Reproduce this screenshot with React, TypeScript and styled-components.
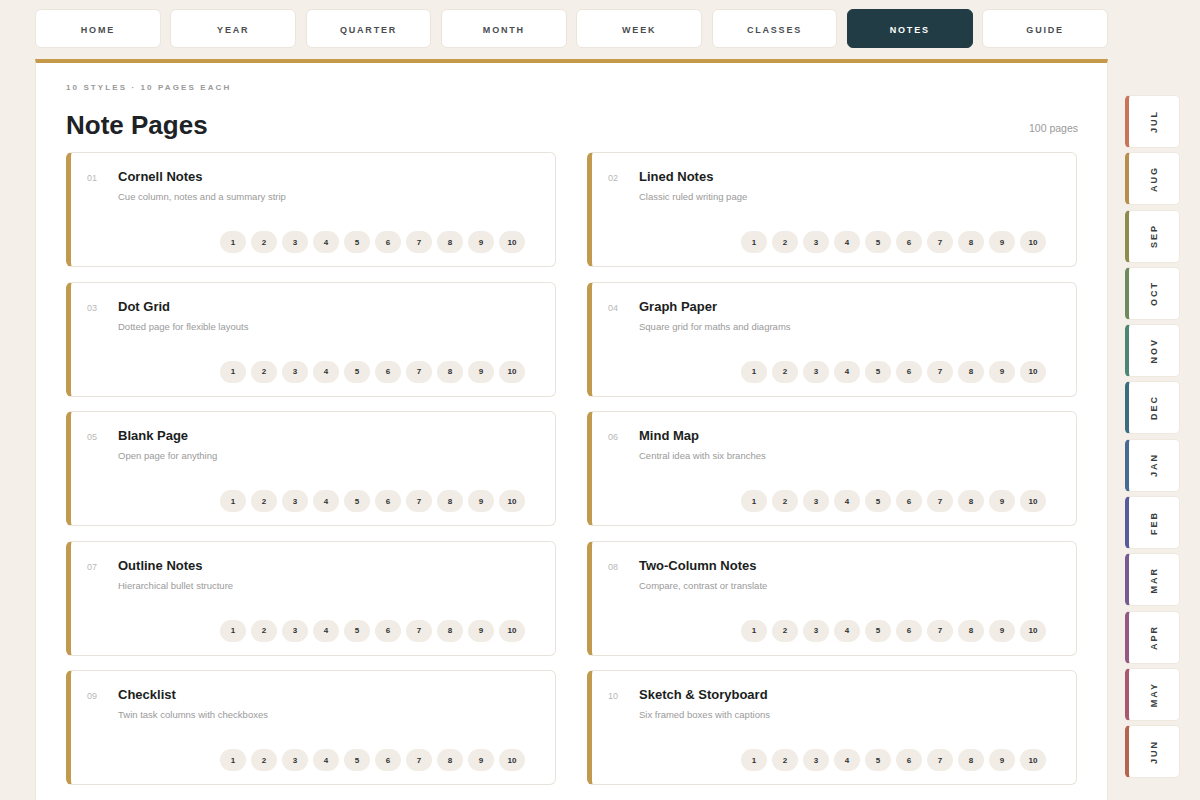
import styled, { createGlobalStyle } from "styled-components";

const GlobalStyle = createGlobalStyle`
  html, body {
    margin: 0;
    padding: 0;
    background: #f4efe9;
    font-family: "Liberation Sans", Arial, sans-serif;
  }
  * { box-sizing: border-box; }
`;

const navItems = ["HOME", "YEAR", "QUARTER", "MONTH", "WEEK", "CLASSES", "NOTES", "GUIDE"];

const noteStyles = [
  { title: "Cornell Notes", desc: "Cue column, notes and a summary strip" },
  { title: "Lined Notes", desc: "Classic ruled writing page" },
  { title: "Dot Grid", desc: "Dotted page for flexible layouts" },
  { title: "Graph Paper", desc: "Square grid for maths and diagrams" },
  { title: "Blank Page", desc: "Open page for anything" },
  { title: "Mind Map", desc: "Central idea with six branches" },
  { title: "Outline Notes", desc: "Hierarchical bullet structure" },
  { title: "Two-Column Notes", desc: "Compare, contrast or translate" },
  { title: "Checklist", desc: "Twin task columns with checkboxes" },
  { title: "Sketch & Storyboard", desc: "Six framed boxes with captions" },
];

const months = [
  { name: "JUL", color: "#c8735a" },
  { name: "AUG", color: "#b98d4b" },
  { name: "SEP", color: "#8e8b4f" },
  { name: "OCT", color: "#6e8a5c" },
  { name: "NOV", color: "#4c8572" },
  { name: "DEC", color: "#3d6c80" },
  { name: "JAN", color: "#476a92" },
  { name: "FEB", color: "#585c9a" },
  { name: "MAR", color: "#785a93" },
  { name: "APR", color: "#935883" },
  { name: "MAY", color: "#a8586c" },
  { name: "JUN", color: "#b5654d" },
];

const pages = Array.from({ length: 10 }, (_, i) => i + 1);

const App = () => {
  return (
    <>
      <GlobalStyle />
      <Layout>
        <MainColumn>
          <Nav>
            {navItems.map((item) => (
              <NavButton key={item} $active={item === "NOTES"}>
                {item}
              </NavButton>
            ))}
          </Nav>

          <Panel>
            <Eyebrow>10 STYLES · 10 PAGES EACH</Eyebrow>
            <TitleRow>
              <Title>Note Pages</Title>
              <PageCount>100 pages</PageCount>
            </TitleRow>

            <CardGrid>
              {noteStyles.map((style, i) => (
                <Card key={style.title}>
                  <CardHead>
                    <CardNumber>{String(i + 1).padStart(2, "0")}</CardNumber>
                    <div>
                      <CardTitle>{style.title}</CardTitle>
                      <CardDesc>{style.desc}</CardDesc>
                    </div>
                  </CardHead>
                  <Pills>
                    {pages.map((p) => (
                      <Pill key={p}>{p}</Pill>
                    ))}
                  </Pills>
                </Card>
              ))}
            </CardGrid>
          </Panel>
        </MainColumn>

        <Sidebar>
          {months.map((m) => (
            <MonthTab key={m.name} $color={m.color}>
              <MonthLabel>{m.name}</MonthLabel>
            </MonthTab>
          ))}
        </Sidebar>
      </Layout>
    </>
  );
};

const Layout = styled.div`
  display: flex;
  align-items: flex-start;
  gap: 17px;
  padding: 9px 0 0 35px;
  height: 800px;
  overflow: hidden;
`;

const MainColumn = styled.div`
  width: 1073px;
  display: flex;
  flex-direction: column;
  gap: 11px;
`;

const Nav = styled.nav`
  display: grid;
  grid-template-columns: repeat(8, 1fr);
  gap: 9.5px;
`;

const NavButton = styled.div<{ $active?: boolean }>`
  height: 39px;
  display: flex;
  align-items: center;
  justify-content: center;
  padding-top: 3px;
  border-radius: 6px;
  border: 1px solid ${(p) => (p.$active ? "#213c45" : "#ebe5dc")};
  background: ${(p) => (p.$active ? "#213c45" : "#ffffff")};
  color: ${(p) => (p.$active ? "#ffffff" : "#4a4d50")};
  font-size: 9px;
  font-weight: 700;
  letter-spacing: 1.8px;
`;

const Panel = styled.section`
  background: #ffffff;
  border: 1px solid #ece6dc;
  border-top: 4px solid #c49a4a;
  padding: 20px 30px 40px 30px;
  min-height: 800px;
`;

const Eyebrow = styled.div`
  font-size: 8px;
  font-weight: 700;
  letter-spacing: 2.1px;
  color: #9a9a9a;
`;

const TitleRow = styled.div`
  display: flex;
  justify-content: space-between;
  align-items: baseline;
  margin-top: 18px;
  margin-bottom: 12px;
`;

const Title = styled.h1`
  margin: 0;
  font-size: 26px;
  font-weight: 700;
  color: #1d2226;
  line-height: 30px;
`;

const PageCount = styled.span`
  font-size: 10.5px;
  color: #9a9a9a;
  margin-right: -1px;
  position: relative;
  top: -2px;
`;

const CardGrid = styled.div`
  display: grid;
  grid-template-columns: 1fr 1fr;
  column-gap: 31px;
  row-gap: 14.5px;
`;

const Card = styled.div`
  height: 115px;
  display: flex;
  flex-direction: column;
  border: 1px solid #e8e3da;
  border-left: 5px solid #c29a4d;
  border-radius: 6px;
  padding: 15px 30px 13px 16px;
`;

const CardHead = styled.div`
  display: flex;
  align-items: flex-start;
`;

const CardNumber = styled.span`
  width: 31px;
  font-size: 9px;
  color: #b8b8b8;
  padding-top: 5px;
`;

const CardTitle = styled.div`
  font-size: 13px;
  font-weight: 700;
  color: #1b1e21;
  line-height: 17px;
`;

const CardDesc = styled.div`
  margin-top: 6px;
  font-size: 9.5px;
  color: #9a9a9a;
`;

const Pills = styled.div`
  margin-top: auto;
  display: flex;
  justify-content: flex-end;
  gap: 5px;
`;

const Pill = styled.span`
  width: 26px;
  height: 22px;
  border-radius: 11px;
  background: #f1ece5;
  display: flex;
  align-items: center;
  justify-content: center;
  font-size: 8px;
  font-weight: 700;
  color: #2f3336;
`;

const Sidebar = styled.aside`
  margin-top: 86px;
  display: flex;
  flex-direction: column;
  gap: 4.3px;
`;

const MonthTab = styled.div<{ $color: string }>`
  width: 55px;
  height: 53px;
  background: #ffffff;
  border: 1px solid #eee8df;
  border-left: 4px solid ${(p) => p.$color};
  border-radius: 5px;
  display: flex;
  align-items: center;
  justify-content: center;
`;

const MonthLabel = styled.span`
  writing-mode: vertical-rl;
  transform: rotate(180deg);
  font-size: 9px;
  font-weight: 700;
  letter-spacing: 2px;
  color: #3a3d40;
`;

export default App;
